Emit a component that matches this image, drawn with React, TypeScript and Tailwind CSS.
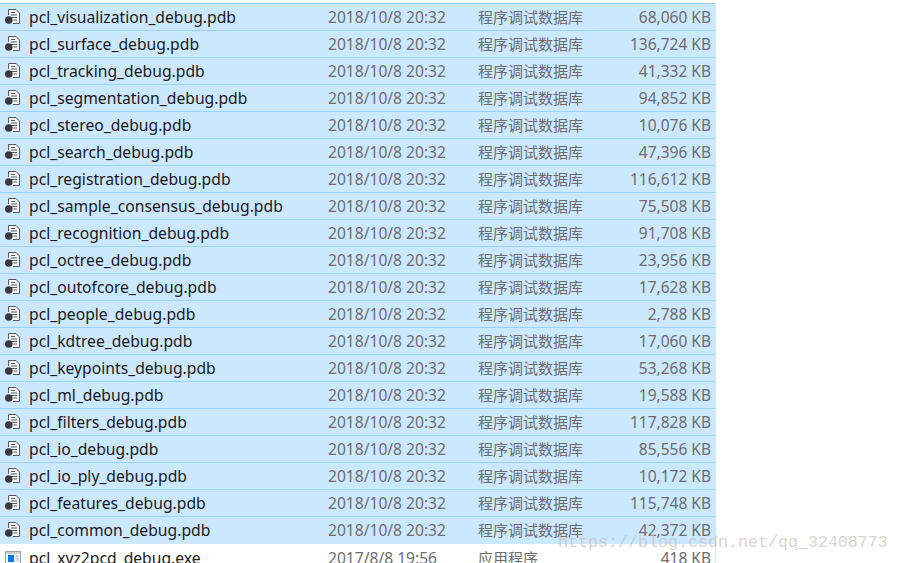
const rows = [
  ['pcl_visualization_debug.pdb', '68,060 KB'],
  ['pcl_surface_debug.pdb', '136,724 KB'],
  ['pcl_tracking_debug.pdb', '41,332 KB'],
  ['pcl_segmentation_debug.pdb', '94,852 KB'],
  ['pcl_stereo_debug.pdb', '10,076 KB'],
  ['pcl_search_debug.pdb', '47,396 KB'],
  ['pcl_registration_debug.pdb', '116,612 KB'],
  ['pcl_sample_consensus_debug.pdb', '75,508 KB'],
  ['pcl_recognition_debug.pdb', '91,708 KB'],
  ['pcl_octree_debug.pdb', '23,956 KB'],
  ['pcl_outofcore_debug.pdb', '17,628 KB'],
  ['pcl_people_debug.pdb', '2,788 KB'],
  ['pcl_kdtree_debug.pdb', '17,060 KB'],
  ['pcl_keypoints_debug.pdb', '53,268 KB'],
  ['pcl_ml_debug.pdb', '19,588 KB'],
  ['pcl_filters_debug.pdb', '117,828 KB'],
  ['pcl_io_debug.pdb', '85,556 KB'],
  ['pcl_io_ply_debug.pdb', '10,172 KB'],
  ['pcl_features_debug.pdb', '115,748 KB'],
  ['pcl_common_debug.pdb', '42,372 KB'],
]

const PdbIcon = () => (
  <svg width="16" height="16" viewBox="0 0 16 16" className="block shrink-0 -mt-[1px]">
    <path d="M3.5 6V0.5H11L14.5 4V14.5H8" fill="#f6f8fa" stroke="#55595f" />
    <path d="M6 3.5h4M6 6h6M6 8.5h6M8.5 11h3.5" stroke="#55595f" fill="none" />
    <circle cx="3.8" cy="11" r="3.8" fill="#3a3a3a" />
  </svg>
)

const ExeIcon = () => (
  <svg width="16" height="16" viewBox="0 0 16 16" className="block shrink-0">
    <rect x="0.5" y="1.5" width="15" height="13" fill="#f4f6f8" stroke="#9aa0a6" />
    <rect x="1" y="2" width="14" height="2" fill="#c9ced4" />
    <rect x="3" y="5" width="6" height="7" fill="#0a78e0" />
    <path d="M10.5 6h3M10.5 8h3M10.5 10h3" stroke="#a8adb3" />
  </svg>
)

const Row = ({ name, date, type, size, selected, icon }: { name: string; date: string; type: string; size: string; selected: boolean; icon: React.ReactNode }) => (
  <div className={`flex items-center h-[27px] pl-[5px] pr-[4px] ${selected ? 'bg-[#cce8ff] border-t border-[#99d1ff]' : 'pt-[1px]'}`}>
    <div className="w-[24px] shrink-0">{icon}</div>
    <div className="w-[299px] shrink-0 pt-[2px] text-[15.7px] text-[#1a1a1a] whitespace-nowrap">{name}</div>
    <div className="w-[150px] shrink-0 pt-[2px] text-[15.6px] text-[#6d6d6d] whitespace-nowrap">{date}</div>
    <div className="w-[110px] shrink-0 text-[15px] text-[#6d6d6d] whitespace-nowrap">{type}</div>
    <div className="flex-1 pt-[2px] text-right text-[15.5px] text-[#6d6d6d] whitespace-nowrap">{size}</div>
  </div>
)

export default function App() {
  return (
    <div className="relative w-[900px] h-[563px] overflow-hidden bg-white pt-[3px] font-['Noto_Sans','Noto_Sans_CJK_SC',sans-serif]">
      <div className="w-[716px] border-r border-[#cce8ff]">
        {rows.map(([name, size]) => (
          <Row key={name} name={name} date="2018/10/8 20:32" type="程序调试数据库" size={size} selected icon={<PdbIcon />} />
        ))}
        <div className="h-[1px] bg-[#cce8ff]" />
        <Row name="pcl_xyz2pcd_debug.exe" date="2017/8/8 19:56" type="应用程序" size="418 KB" selected={false} icon={<ExeIcon />} />
      </div>
      <div className="absolute left-[558px] top-[532px] text-[16.67px] leading-[22px] text-[#c4c1b8]/70 font-['Liberation_Mono',monospace] whitespace-nowrap">
        https://blog.csdn.net/qq_32408773
      </div>
    </div>
  )
}
